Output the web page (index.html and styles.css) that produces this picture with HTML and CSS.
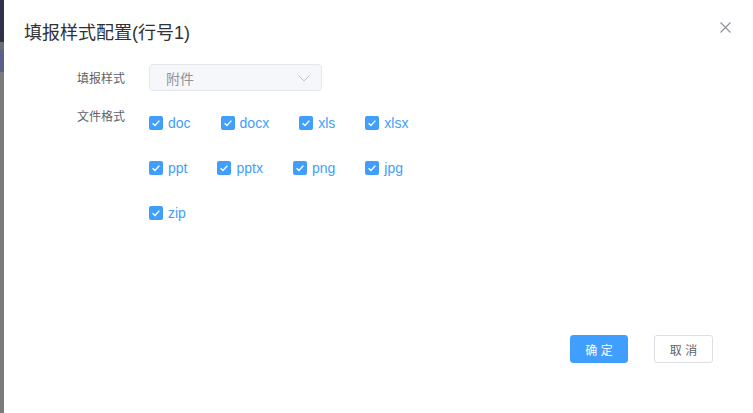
FILE: index.html
```html
<!DOCTYPE html>
<html lang="zh-CN">
<head>
<meta charset="utf-8">
<title>填报样式配置</title>
<link rel="stylesheet" href="styles.css">
</head>
<body>
<div class="page">
  <div class="edge"></div>
  <div class="dialog">
    <div class="dialog-header">
      <span class="dialog-title">填报样式配置(行号1)</span>
      <button class="dialog-close" aria-label="关闭">
        <svg width="11" height="11" viewBox="0 0 11 11"><path d="M0.5 0.5 L10.5 10.5 M10.5 0.5 L0.5 10.5" stroke="#909399" stroke-width="1.2" fill="none"/></svg>
      </button>
    </div>
    <div class="dialog-body">
      <div class="form-row row-select">
        <div class="form-label">填报样式</div>
        <div class="select">
          <span class="select-value">附件</span>
          <svg class="select-arrow" width="12" height="7" viewBox="0 0 12 7"><path d="M0.5 0.5 L6 6 L11.5 0.5" stroke="#c0c4cc" stroke-width="1" fill="none"/></svg>
        </div>
      </div>
      <div class="form-row row-formats">
        <div class="form-label label-formats">文件格式</div>
        <div class="checkbox-group">
          <label class="checkbox"><span class="box"><svg width="14" height="14" viewBox="0 0 14 14"><path d="M3.6 7.2 L6 9.5 L10.4 4.6" stroke="#fff" stroke-width="1.4" fill="none"/></svg></span><span class="cb-text">doc</span></label>
          <label class="checkbox"><span class="box"><svg width="14" height="14" viewBox="0 0 14 14"><path d="M3.6 7.2 L6 9.5 L10.4 4.6" stroke="#fff" stroke-width="1.4" fill="none"/></svg></span><span class="cb-text">docx</span></label>
          <label class="checkbox"><span class="box"><svg width="14" height="14" viewBox="0 0 14 14"><path d="M3.6 7.2 L6 9.5 L10.4 4.6" stroke="#fff" stroke-width="1.4" fill="none"/></svg></span><span class="cb-text">xls</span></label>
          <label class="checkbox"><span class="box"><svg width="14" height="14" viewBox="0 0 14 14"><path d="M3.6 7.2 L6 9.5 L10.4 4.6" stroke="#fff" stroke-width="1.4" fill="none"/></svg></span><span class="cb-text">xlsx</span></label>
          <span class="break"></span>
          <label class="checkbox"><span class="box"><svg width="14" height="14" viewBox="0 0 14 14"><path d="M3.6 7.2 L6 9.5 L10.4 4.6" stroke="#fff" stroke-width="1.4" fill="none"/></svg></span><span class="cb-text">ppt</span></label>
          <label class="checkbox"><span class="box"><svg width="14" height="14" viewBox="0 0 14 14"><path d="M3.6 7.2 L6 9.5 L10.4 4.6" stroke="#fff" stroke-width="1.4" fill="none"/></svg></span><span class="cb-text">pptx</span></label>
          <label class="checkbox"><span class="box"><svg width="14" height="14" viewBox="0 0 14 14"><path d="M3.6 7.2 L6 9.5 L10.4 4.6" stroke="#fff" stroke-width="1.4" fill="none"/></svg></span><span class="cb-text">png</span></label>
          <label class="checkbox"><span class="box"><svg width="14" height="14" viewBox="0 0 14 14"><path d="M3.6 7.2 L6 9.5 L10.4 4.6" stroke="#fff" stroke-width="1.4" fill="none"/></svg></span><span class="cb-text">jpg</span></label>
          <span class="break"></span>
          <label class="checkbox"><span class="box"><svg width="14" height="14" viewBox="0 0 14 14"><path d="M3.6 7.2 L6 9.5 L10.4 4.6" stroke="#fff" stroke-width="1.4" fill="none"/></svg></span><span class="cb-text">zip</span></label>
        </div>
      </div>
    </div>
    <div class="dialog-footer">
      <button class="btn btn-primary">确 定</button>
      <button class="btn btn-default">取 消</button>
    </div>
  </div>
</div>
</body>
</html>
```

FILE: styles.css
```css
* { box-sizing: border-box; }
html, body { margin: 0; padding: 0; height: 100%; background: #fff; }
body {
  font-family: "Liberation Sans", Arial, "Noto Sans CJK SC", sans-serif;
  color: #606266;
}
.page {
  display: flex;
  height: 413px;
}
.edge {
  width: 4px;
  flex: none;
  background: linear-gradient(to bottom, #2f3049 0, #2f3049 42px, #6c6c74 42px, #6c6c74 50px, #5b5f8c 50px, #5b5f8c 72px, #7b7b7b 72px, #7b7b7b 100%);
}
.dialog {
  flex: 1;
  display: flex;
  flex-direction: column;
  background: #fff;
  position: relative;
}
.dialog-header {
  padding: 20px 20px 0 20px;
}
.dialog-title {
  display: block;
  font-size: 18px;
  line-height: 26px;
  color: #303133;
}
.dialog-close {
  position: absolute;
  top: 22px;
  right: 22px;
  width: 11px;
  height: 11px;
  padding: 0;
  border: 0;
  background: transparent;
  display: flex;
}
.dialog-body {
  padding: 18px 0 0 21px;
}
.form-row {
  display: flex;
  align-items: flex-start;
}
.form-label {
  width: 100px;
  margin-right: 24px;
  text-align: right;
  font-size: 12px;
  line-height: 30px;
  color: #606266;
  flex: none;
}
.row-formats {
  margin-top: 6px;
}
.label-formats {
  line-height: 34px;
}
.select {
  width: 173px;
  height: 27px;
  border: 1px solid #e4e7ed;
  border-radius: 4px;
  background: #f5f7fa;
  display: flex;
  align-items: center;
  justify-content: space-between;
  padding: 0 11px 0 16px;
}
.select-value {
  font-size: 14px;
  color: #909399;
}
.select-arrow {
  margin-top: 1px;
}
.checkbox-group {
  display: flex;
  flex-wrap: wrap;
  width: 330px;
}
.break {
  flex-basis: 100%;
  height: 0;
}
.checkbox {
  display: flex;
  align-items: center;
  height: 45px;
  margin-right: 30px;
  cursor: pointer;
}
.box {
  width: 14px;
  height: 14px;
  border-radius: 2px;
  background: #409eff;
  display: flex;
}
.cb-text {
  padding-left: 5px;
  font-size: 14px;
  color: #409eff;
}
.dialog-footer {
  margin-top: auto;
  display: flex;
  justify-content: flex-end;
  gap: 26px;
  padding: 0 40px 50px 0;
}
.btn {
  height: 28px;
  border-radius: 3px;
  font-family: "Liberation Sans", Arial, "Noto Sans CJK SC", sans-serif;
  font-size: 12px;
  padding: 0;
  cursor: pointer;
}
.btn-primary {
  width: 58px;
  background: #409eff;
  border: 1px solid #409eff;
  color: #fff;
}
.btn-default {
  width: 59px;
  background: #fff;
  border: 1px solid #dcdfe6;
  color: #606266;
}
```
